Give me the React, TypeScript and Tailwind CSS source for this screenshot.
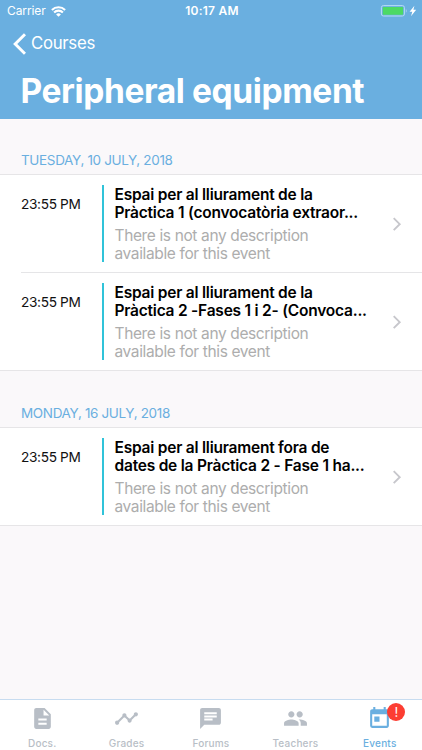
import React from "react";
import { MdDescription, MdTimeline, MdChat, MdPeople, MdToday } from "react-icons/md";

type EventItem = { time: string; title: [string, string] };

const sections: { date: string; spacing: string; events: EventItem[] }[] = [
  {
    date: "TUESDAY, 10 JULY, 2018",
    spacing: "h-[56px] pb-[5.5px]",
    events: [
      { time: "23:55 PM", title: ["Espai per al lliurament de la", "Pràctica 1 (convocatòria extraor..."] },
      { time: "23:55 PM", title: ["Espai per al lliurament de la", "Pràctica 2 -Fases 1 i 2- (Convoca..."] },
    ],
  },
  {
    date: "MONDAY, 16 JULY, 2018",
    spacing: "h-[57px] pb-[5px]",
    events: [
      { time: "23:55 PM", title: ["Espai per al lliurament fora de", "dates de la Pràctica 2 - Fase 1 ha..."] },
    ],
  },
];

const tabs = [
  { label: "Docs.", Icon: MdDescription },
  { label: "Grades", Icon: MdTimeline },
  { label: "Forums", Icon: MdChat },
  { label: "Teachers", Icon: MdPeople },
  { label: "Events", Icon: MdToday, active: true },
];

function StatusBar() {
  return (
    <div className="grid h-[22px] grid-cols-3 items-center pl-[7px] pr-[5px] text-[12px] leading-[22px]">
      <div className="flex items-center gap-[6px]">
        <span className="tracking-[-0.1px]">Carrier</span>
        <svg className="-ml-px" width="15" height="11" viewBox="0 0 15 11" fill="none" stroke="white" strokeWidth="2.1">
          <path d="M0.9 4a9.4 9.4 0 0 1 13.2 0" />
          <path d="M3.1 6.5a6.2 6.2 0 0 1 8.8 0" />
          <path d="M5.1 8.4a3.4 3.4 0 0 1 4.8 0L7.5 10.8z" fill="white" stroke="none" />
        </svg>
      </div>
      <span className="text-center font-semibold tracking-[0.25px]">10:17 AM</span>
      <svg className="justify-self-end" width="37" height="12" viewBox="0 0 37 12">
        <rect x="1.4" y="0.6" width="23" height="10.4" rx="2" fill="none" stroke="#b7dcf5" />
        <rect x="2.8" y="2" width="20.3" height="7.7" rx="0.8" fill="#4cd964" />
        <path d="M25.8 4v3.8c1.3-.4 1.3-3.4 0-3.8z" fill="#a9d1ee" />
        <path d="M34.4 0.8l-4.8 5.9h2.7L31 11.2l5.2-6.4h-2.8z" fill="white" />
      </svg>
    </div>
  );
}

function EventRow({ event, last }: { event: EventItem; last: boolean }) {
  return (
    <div className="pl-[21px]">
      <div className={"flex pt-[10px] " + (last ? "h-[97px]" : "h-[98px] border-b border-[#e5e5e7]")}>
        <div className="w-[81px] shrink-0 pt-[10px] text-[13.7px] leading-[18px] tracking-[-0.36px] text-[#111]">{event.time}</div>
        <div className="h-[77px] w-[2px] shrink-0 bg-[#30c3d9]" />
        <div className="w-[270px] shrink-0 whitespace-nowrap pl-[10.5px] pt-px text-[15.5px] leading-[18px]">
          <div className="font-semibold tracking-[-0.22px] text-black">
            <div>{event.title[0]}</div>
            <div>{event.title[1]}</div>
          </div>
          <div className="pt-[5px] tracking-[-0.37px] text-[#adadad]">
            <div>There is not any description</div>
            <div>available for this event</div>
          </div>
        </div>
        <svg className="ml-auto mr-[19px] mt-[32px] shrink-0" width="11" height="15" viewBox="0 0 11 15" fill="none" stroke="#c7c7cc" strokeWidth="1.9">
          <path d="M1.7 1.2l6 6-6 6" />
        </svg>
      </div>
    </div>
  );
}

export default function App() {
  return (
    <div className="flex h-[750px] w-[422px] flex-col overflow-hidden bg-[#faf8fa] font-['Inter',sans-serif]">
      <header className="h-[119px] shrink-0 bg-[#6aafe0] text-white">
        <StatusBar />
        <div className="flex h-[43px] items-center gap-[5px] pl-[13px]">
          <svg width="13" height="22" viewBox="0 0 13 22" fill="none" stroke="white" strokeWidth="3">
            <path d="M12 1.2L2.2 11 12 20.8" />
          </svg>
          <span className="text-[16.8px] tracking-[-0.3px]">Courses</span>
        </div>
        <h1 className="pl-[20.5px] pt-[6px] text-[33.5px] font-bold leading-[41px] tracking-[-0.4px]">Peripheral equipment</h1>
      </header>
      <main className="flex-1">
        {sections.map((s) => (
          <section key={s.date}>
            <h2 className={"flex items-end border-b border-[#e6e5e7] pl-[21px] text-[13.5px] leading-[18px] tracking-[-0.35px] text-[#6aafe0] " + s.spacing}>
              {s.date}
            </h2>
            <div className="border-b border-[#e6e5e7] bg-white">
              {s.events.map((e, i) => (
                <EventRow key={i} event={e} last={i === s.events.length - 1} />
              ))}
            </div>
          </section>
        ))}
      </main>
      <nav className="grid h-[51px] shrink-0 grid-cols-5 border-t border-[#c7dcf0] bg-white">
        {tabs.map(({ label, Icon, active }) => (
          <div key={label} className={"flex flex-col items-center pt-[6px] " + (active ? "text-[#6aafe0]" : "text-[#b8bec6]")}>
            <div className="relative">
              <Icon size={25} className="block" />
              {active && (
                <span className="absolute -top-[3px] left-[20px] flex size-[18px] items-center justify-center rounded-full bg-[#fc3d32] text-[13px] leading-none text-white">
                  !
                </span>
              )}
            </div>
            <span className="pt-[5px] text-[10px] font-medium leading-[14px] tracking-[0.2px]">{label}</span>
          </div>
        ))}
      </nav>
    </div>
  );
}
